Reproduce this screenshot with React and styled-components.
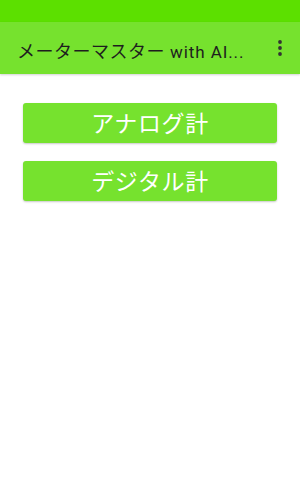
import React from "react";
import styled, { createGlobalStyle } from "styled-components";

const Global = createGlobalStyle`
  html, body { margin: 0; padding: 0; background: #ffffff; }
  body { font-family: "Roboto", "Noto Sans CJK JP", sans-serif; }
`;

const Screen = styled.div`
  width: 300px;
  height: 500px;
  display: flex;
  flex-direction: column;
  background: #ffffff;
  overflow: hidden;
`;

const StatusBar = styled.div`
  height: 22px;
  background: #5ce000;
  flex-shrink: 0;
`;

const AppBar = styled.div`
  height: 52px;
  background: #76e22e;
  display: flex;
  align-items: center;
  padding: 0 10px 0 17px;
  box-shadow: 0 1px 2px rgba(0, 0, 0, 0.18);
  flex-shrink: 0;
  position: relative;
  z-index: 1;
`;

const Title = styled.div`
  flex: 1;
  font-family: "Roboto", "Noto Sans CJK JP", sans-serif;
  font-size: 17px;
  color: #1e1e1e;
  white-space: nowrap;
  overflow: hidden;
  padding-top: 4px;
`;

const Kana = styled.span`
  font-family: "Noto Sans CJK JP", sans-serif;
  font-size: 18px;
  letter-spacing: 0.5px;
`;

const Latin = styled.span`
  letter-spacing: 0.9px;
`;

const MenuButton = styled.div`
  width: 20px;
  height: 24px;
  display: flex;
  align-items: center;
  justify-content: center;
`;

const Content = styled.div`
  display: flex;
  flex-direction: column;
  gap: 18px;
  padding: 29px 23px 0 23px;
`;

const Button = styled.button`
  height: 40px;
  border: none;
  border-radius: 3px;
  background: #76e22e;
  color: #ffffff;
  font-family: "Noto Sans CJK JP", sans-serif;
  font-size: 23px;
  letter-spacing: 0.6px;
  display: flex;
  align-items: center;
  justify-content: center;
  box-shadow: 0 1px 2px rgba(0, 0, 0, 0.22);
  padding: 0 0 2px 0;
`;

export default function App() {
  return (
    <>
      <Global />
      <Screen>
        <StatusBar />
        <AppBar>
          <Title>
            <Kana>メーターマスター</Kana>
            <Latin> with AI...</Latin>
          </Title>
          <MenuButton>
            <svg width="6" height="18" viewBox="0 0 6 18">
              <circle cx="3" cy="3" r="1.9" fill="#333" />
              <circle cx="3" cy="9" r="1.9" fill="#333" />
              <circle cx="3" cy="15" r="1.9" fill="#333" />
            </svg>
          </MenuButton>
        </AppBar>
        <Content>
          <Button>アナログ計</Button>
          <Button>デジタル計</Button>
        </Content>
      </Screen>
    </>
  );
}
